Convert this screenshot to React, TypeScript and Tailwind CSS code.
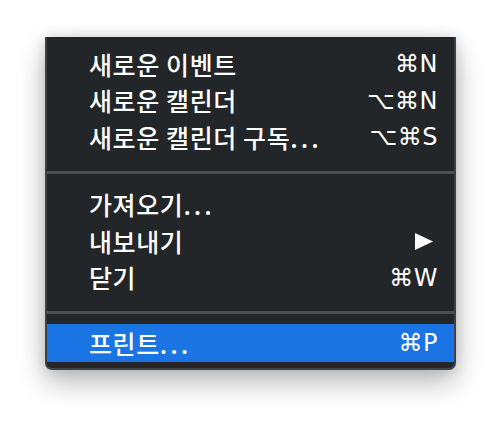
import React from "react";

type Item = {
  label: string;
  shortcut?: string;
  submenu?: boolean;
  active?: boolean;
};

const GROUPS: Item[][] = [
  [
    { label: "새로운 이벤트", shortcut: "⌘N" },
    { label: "새로운 캘린더", shortcut: "⌥⌘N" },
    { label: "새로운 캘린더 구독...", shortcut: "⌥⌘S" },
  ],
  [
    { label: "가져오기..." },
    { label: "내보내기", submenu: true },
    { label: "닫기", shortcut: "⌘W" },
  ],
];

function Label({ text }: { text: string }) {
  const dots = text.endsWith("...");
  const base = dots ? text.slice(0, -3) : text;
  return (
    <span className="text-[25px] font-medium leading-none tracking-[0.6px]">
      {base}
      {dots ? <span className="tracking-[3px]">...</span> : null}
    </span>
  );
}

function Row({ item }: { item: Item }) {
  return (
    <div
      className={
        "flex items-center justify-between pl-[42px] pr-[16px] text-white " +
        (item.active ? "h-[38px] bg-[#1a74e4]" : "h-[36.5px]")
      }
    >
      <Label text={item.label} />
      {item.shortcut ? (
        <span
          className="text-[24px] font-medium leading-none tracking-[0.5px]"
          style={{ fontFamily: '"DejaVu Sans", "Noto Sans CJK KR", sans-serif' }}
        >
          {item.shortcut}
        </span>
      ) : null}
      {item.submenu ? (
        <svg width="18" height="17" viewBox="0 0 18 17" className="mr-[5px]">
          <path d="M0 0 L18 8.5 L0 17 Z" fill="#ffffff" />
        </svg>
      ) : null}
    </div>
  );
}

function Separator() {
  return <div className="h-[3px] bg-[#4b4e50]" />;
}

export default function App() {
  return (
    <div
      className="h-[422px] w-[502px] overflow-hidden bg-white pl-[45px] pt-[37px]"
      style={{ fontFamily: '"Noto Sans CJK KR", "DejaVu Sans", sans-serif' }}
    >
      <div className="w-[411px] rounded-b-[7px] border-x-2 border-b-2 border-[#3f4244] bg-[#232628] pb-[6px] pt-[9px] shadow-[0_12px_28px_rgba(0,0,0,0.28),0_0_14px_rgba(0,0,0,0.12)]">
        {GROUPS[0].map((item) => (
          <Row key={item.label} item={item} />
        ))}
        <div className="pb-[13px] pt-[15px]">
          <Separator />
        </div>
        {GROUPS[1].map((item) => (
          <Row key={item.label} item={item} />
        ))}
        <div className="pb-[10px] pt-[15px]">
          <Separator />
        </div>
        <Row item={{ label: "프린트...", shortcut: "⌘P", active: true }} />
      </div>
    </div>
  );
}
